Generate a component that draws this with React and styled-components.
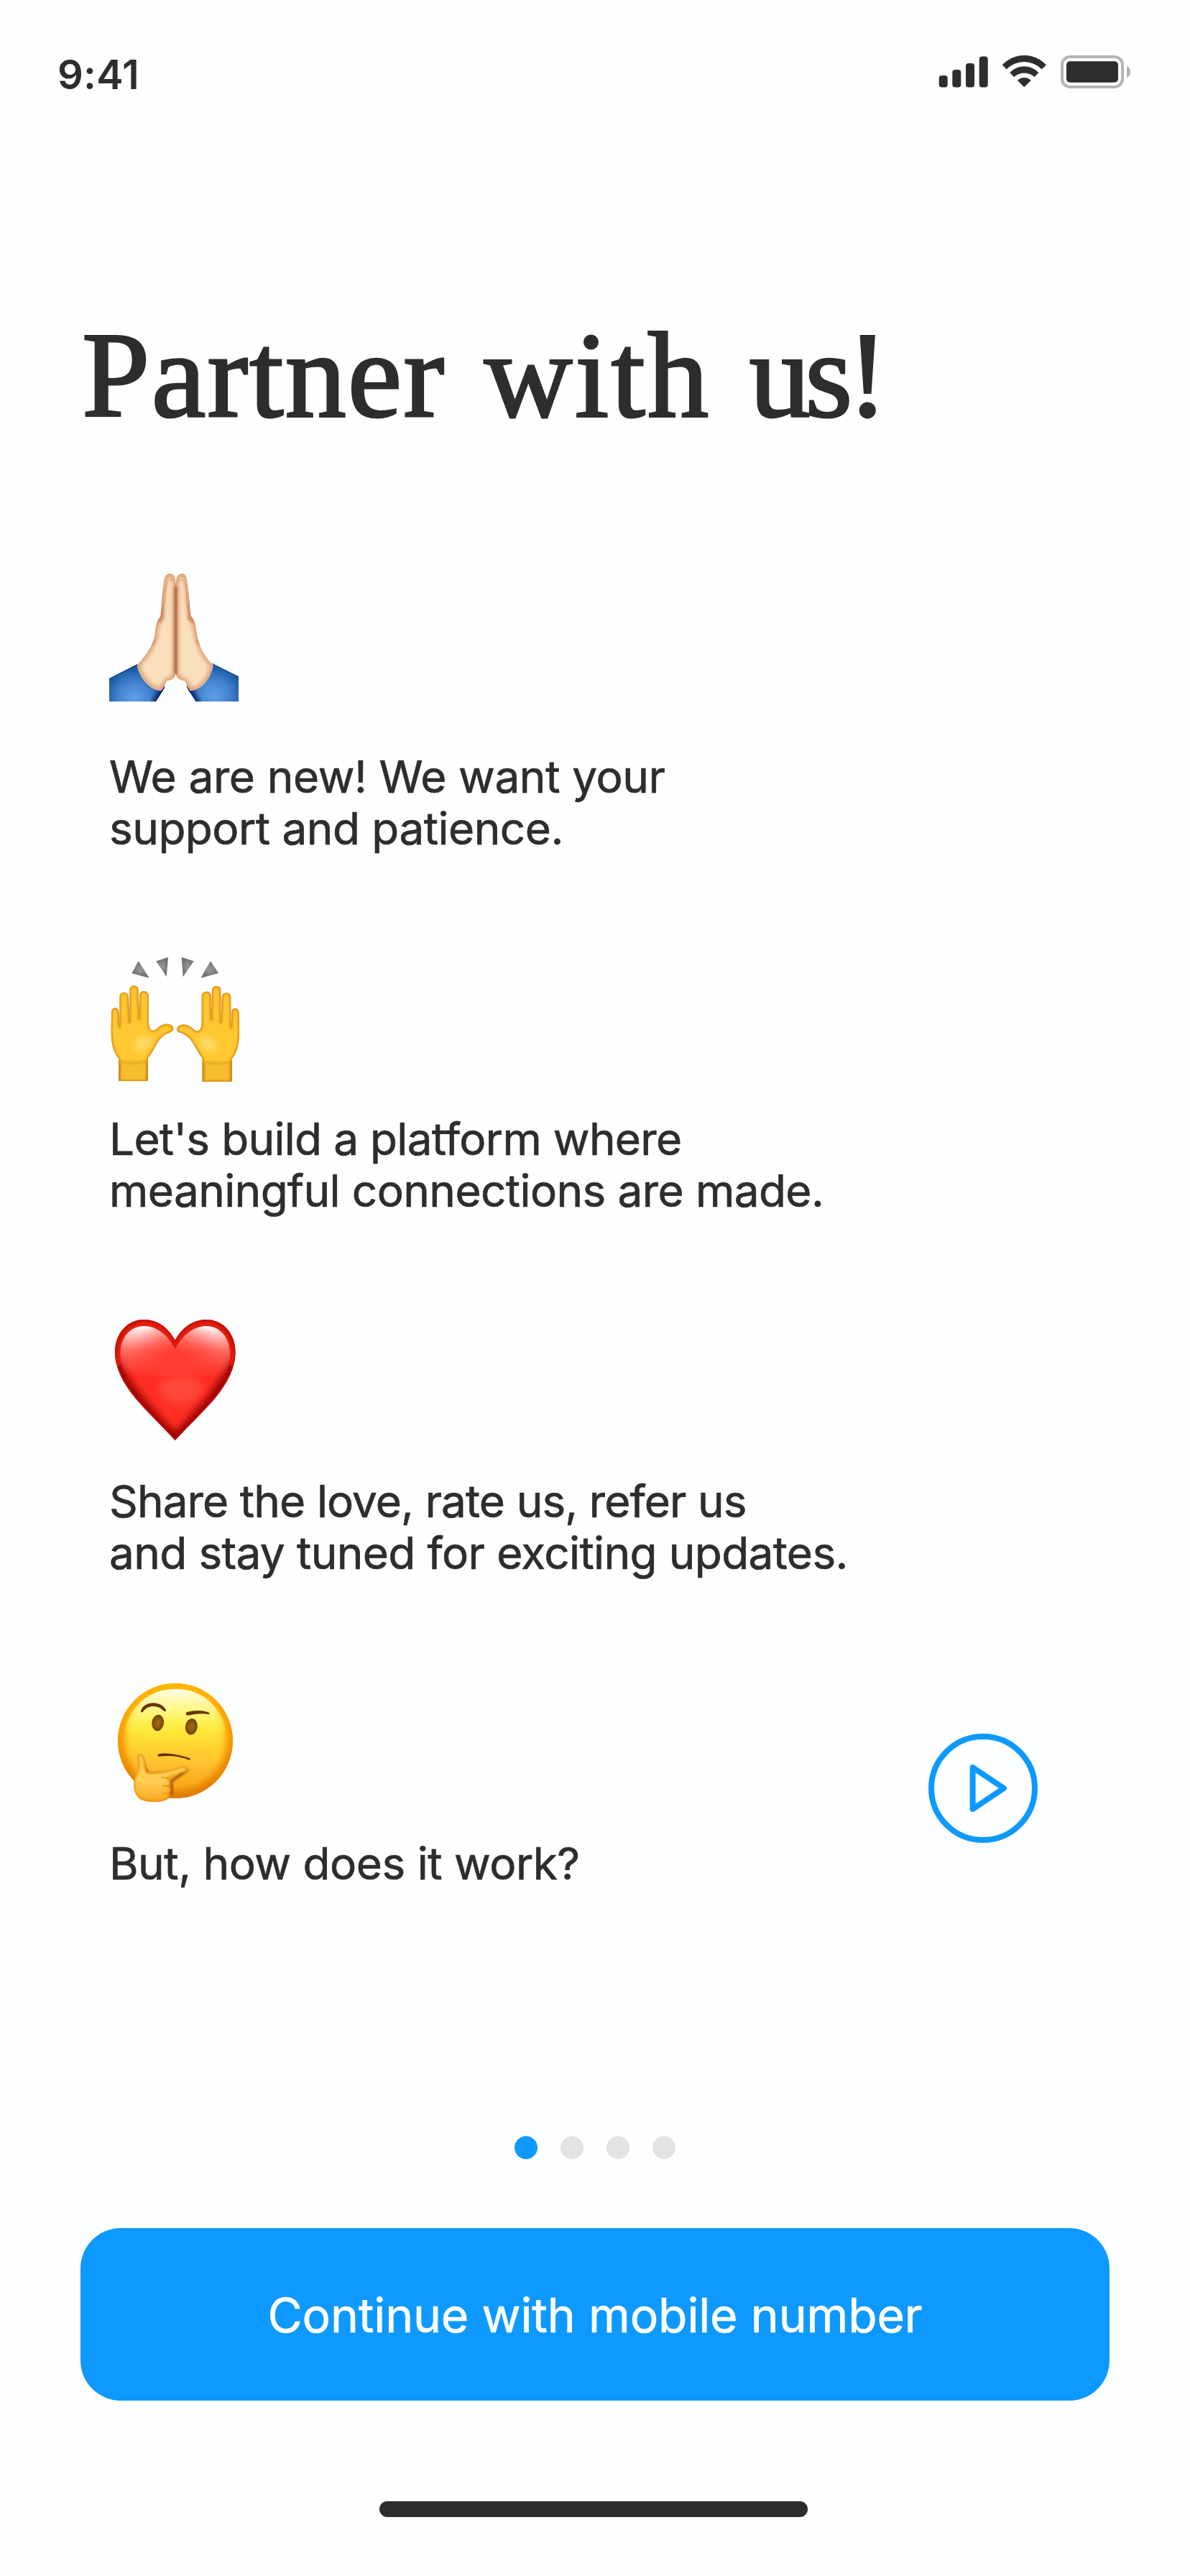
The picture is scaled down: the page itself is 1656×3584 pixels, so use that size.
import React from 'react';
import styled, { createGlobalStyle } from 'styled-components';

const ink = '#2b2d2f';
const blue = '#0d99ff';

const GlobalStyle = createGlobalStyle`
  * { box-sizing: border-box; }
  body { margin: 0; background: #fdfeff; }
`;

const Screen = styled.main`
  display: flex;
  flex-direction: column;
  width: 1656px;
  height: 3584px;
  overflow: hidden;
  background: #fdfeff;
  color: ${ink};
  font-family: Inter, 'Liberation Sans', sans-serif;
`;

const StatusBar = styled.header`
  display: flex;
  justify-content: space-between;
  align-items: flex-start;
  padding: 70px 80px 0;
  height: 176px;
`;

const Clock = styled.time`
  font-size: 56px;
  font-weight: 600;
  line-height: 68px;
  letter-spacing: 0.3px;
`;

const StatusIcons = styled.svg`
  display: block;
  width: 270px;
  height: 48px;
  margin-top: 6px;
`;

const Title = styled.h1`
  margin: 246px 0 0 114px;
  font-family: 'Liberation Serif', serif;
  font-size: 170px;
  font-weight: 400;
  line-height: 200px;
  word-spacing: 11px;
  white-space: nowrap;
  -webkit-text-stroke: 3px ${ink};
`;

const Word = styled.span`
  letter-spacing: ${(p) => p.$tracking}px;
`;

const Points = styled.ul`
  display: flex;
  flex-direction: column;
  gap: 139px;
  margin: 175px 212px 0 152px;
  padding: 0;
  list-style: none;
`;

const Point = styled.li`
  display: flex;
  justify-content: space-between;
  align-items: center;
`;

const PointBody = styled.div`
  display: flex;
  flex-direction: column;
  gap: ${(p) => p.$gap}px;
`;

const Emoji = styled.svg`
  display: block;
  width: 180px;
  height: 180px;
  overflow: visible;
`;

const Copy = styled.p`
  margin: 0;
  font-size: 62px;
  font-weight: 400;
  line-height: 72px;
  white-space: nowrap;
  -webkit-text-stroke: 0.7px ${ink};
`;

const Line = styled.span`
  display: block;
  letter-spacing: ${(p) => p.$tracking}px;
`;

const PlayButton = styled.button`
  display: block;
  width: 152px;
  height: 152px;
  margin-top: 11px;
  padding: 0;
  border: 0;
  background: none;

  svg { display: block; }
`;

const Footer = styled.footer`
  display: flex;
  flex-direction: column;
  align-items: center;
  margin-top: auto;
  padding: 0 112px 82px;
`;

const Dots = styled.div`
  display: flex;
  gap: 32px;
  margin-bottom: 96px;
`;

const Dot = styled.span`
  width: 32px;
  height: 32px;
  border-radius: 50%;
  background: ${(p) => (p.$active ? blue : '#e3e3e3')};
`;

const ContinueButton = styled.button`
  width: 100%;
  height: 240px;
  margin-bottom: 140px;
  padding: 2px 0 0;
  border: 0;
  border-radius: 56px;
  background: ${blue};
  color: #fdfeff;
  font-family: inherit;
  font-size: 66px;
  font-weight: 400;
  letter-spacing: -0.15px;
  -webkit-text-stroke: 0.7px #fdfeff;
`;

const HomeIndicator = styled.div`
  width: 596px;
  height: 22px;
  margin-right: 4px;
  border-radius: 11px;
  background: ${ink};
`;

function DeviceStatus() {
  return (
    <StatusIcons viewBox="1306 76 270 48" fill={ink}>
      <rect x="1306.7" y="105" width="12" height="16.4" rx="4" />
      <rect x="1325.3" y="97" width="12" height="24.4" rx="4" />
      <rect x="1344" y="88" width="12" height="33.4" rx="4" />
      <rect x="1362.7" y="78.4" width="12" height="43" rx="4" />
      <g transform="translate(1280 60) scale(.3333)" stroke={ink} strokeWidth="2" strokeLinejoin="round">
        <path d="M345 91 A125 125 0 0 1 527 91 L509 108 A103 103 0 0 0 362 108 Z" />
        <path d="M377 123 A82 82 0 0 1 495 123 L479 140 A66 66 0 0 0 393 140 Z" />
        <path d="M409 156 A38 38 0 0 1 463 156 L436 183 Z" />
      </g>
      <rect x="1478" y="79" width="84" height="42" rx="11" fill="none" stroke="#b4b5b6" strokeWidth="4" />
      <rect x="1484" y="85.3" width="72" height="29.4" rx="5" />
      <path d="M1568 92 A8.7 8.7 0 0 1 1568 108 Z" fill="#b4b5b6" />
    </StatusIcons>
  );
}

const sleeve = 'M66 492 L188 430 Q181 434 183 441 C195 490 235 540 283 543 L298 519 Q299 530 292 540 L261 589 L66 589 Z';
const sleeveRight = 'M606 484 L490 426 Q500 431 499 440 C487 493 455 537 405 543 L390 519 Q388 529 396 540 L428 589 L606 589 Z';
const palm = 'M343 475 L343 85 C342 66 331 54 318 54 C303 55 296 68 294 88 C287 130 286 185 280 232 C265 248 260 275 257 310 C250 350 225 390 183 436 C190 485 235 540 283 543 C296 528 298 514 308 502 C328 499 339 492 343 475 Z';
const palmRight = 'M344 475 L344 85 C345 66 356 54 370 54 C383 55 390 68 392 88 C398 130 401 185 407 232 C423 246 427 275 431 305 C438 350 460 395 499 437 C493 490 450 540 405 543 C392 531 392 516 380 502 C360 499 348 492 344 475 Z';

function PrayingHands() {
  return (
    <Emoji viewBox="66 51 540 540">
      <defs>
        <filter id="prayBlur" x="-40%" y="-40%" width="180%" height="180%"><feGaussianBlur stdDeviation="9" /></filter>
        <filter id="praySoft" filterUnits="userSpaceOnUse" x="200" y="20" width="300" height="520"><feGaussianBlur stdDeviation="5" /></filter>
        <clipPath id="prayL"><path d={palm} /></clipPath>
        <clipPath id="prayR"><path d={palmRight} /></clipPath>
        <clipPath id="sleeveL"><path d={sleeve} /></clipPath>
        <clipPath id="sleeveR"><path d={sleeveRight} /></clipPath>
        <radialGradient id="sleeveFillL" gradientUnits="userSpaceOnUse" cx="170" cy="575" r="145">
          <stop offset="0" stopColor="#5f9fe8" /><stop offset=".45" stopColor="#4684cf" /><stop offset="1" stopColor="#0b4b94" />
        </radialGradient>
        <radialGradient id="sleeveFillR" gradientUnits="userSpaceOnUse" cx="500" cy="565" r="145">
          <stop offset="0" stopColor="#5f9fe8" /><stop offset=".45" stopColor="#4684cf" /><stop offset="1" stopColor="#0b4b94" />
        </radialGradient>
      </defs>
      <g clipPath="url(#sleeveL)">
        <path d={sleeve} fill="url(#sleeveFillL)" />
        <path d="M300 515 L255 600" stroke="#001b66" strokeWidth="24" filter="url(#prayBlur)" />
        <path d="M66 492 L190 429" stroke="#002d70" strokeWidth="5" />
      </g>
      <g clipPath="url(#sleeveR)">
        <path d={sleeveRight} fill="url(#sleeveFillR)" />
        <path d="M388 515 L435 600" stroke="#001b66" strokeWidth="24" filter="url(#prayBlur)" />
        <path d="M606 484 L490 425" stroke="#002d70" strokeWidth="5" />
      </g>
      <g clipPath="url(#prayL)">
        <path d={palm} fill="#fadfbd" />
        <path d={palm} fill="none" stroke="#d79468" strokeWidth="20" filter="url(#prayBlur)" />
        <path d="M280 60 L285 240 L255 260 L245 350" fill="none" stroke="#cf8b62" strokeWidth="16" filter="url(#praySoft)" />
        <path d="M280 265 C302 210 296 130 304 100 C309 76 333 75 341 94" fill="none" stroke="#d3997a" strokeWidth="3" />
        <path d="M345 110 V475" stroke="#a9603c" strokeWidth="14" filter="url(#praySoft)" />
      </g>
      <g clipPath="url(#prayR)">
        <path d={palmRight} fill="#fadfbd" />
        <path d={palmRight} fill="none" stroke="#d79468" strokeWidth="20" filter="url(#prayBlur)" />
        <path d="M408 60 L402 240 L432 260 L443 350" fill="none" stroke="#cf8b62" strokeWidth="16" filter="url(#praySoft)" />
        <path d="M407 260 C385 205 390 130 384 100 C379 76 354 75 346 94" fill="none" stroke="#d3997a" strokeWidth="3" />
        <path d="M342 110 V475" stroke="#a9603c" strokeWidth="14" filter="url(#praySoft)" />
      </g>
      <path d="M343.500 95 V472" stroke="#a96543" strokeWidth="2.500" />
    </Emoji>
  );
}

const hand = 'M105 583 L105 487 C84 468 73 425 73 370 L75 295 C76 270 105 270 106 295 L109 360 L109 230 C110 206 145 206 147 230 L151 340 L151 200 C152 178 187 178 188 200 L191 327 L192 224 C193 201 229 201 231 225 L231 335 C232 370 247 380 264 364 C288 340 316 338 331 354 C339 367 333 376 318 380 C288 391 276 408 264 428 C251 452 240 472 228 486 L228 583 Z';

function RaisedHand() {
  return (
    <g clipPath="url(#handClip)">
      <path d={hand} fill="#ffc832" />
      <path d="M100 495 H235 V590 H100 Z" fill="#f6bd30" />
      <ellipse cx="205" cy="425" rx="42" ry="24" transform="rotate(-35 205 425)" fill="#ffdb6c" filter="url(#handBlur)" />
      <path d="M108 498 Q165 520 226 496" fill="none" stroke="#e8a01e" strokeWidth="6" filter="url(#handSoft)" />
      <path d={hand} fill="none" stroke="#da8508" strokeWidth="10" filter="url(#handSoft)" />
      <path d={hand} fill="none" stroke="#de9426" strokeWidth="1.500" />
      <path d="M105 500 V583 M228 500 V583" stroke="#c9861c" strokeWidth="14" filter="url(#handSoft)" />
    </g>
  );
}

function RaisingHands() {
  return (
    <Emoji viewBox="66 54 540 540">
      <defs>
        <clipPath id="handClip"><path d={hand} /></clipPath>
        <filter id="handBlur" x="-50%" y="-50%" width="200%" height="200%"><feGaussianBlur stdDeviation="12" /></filter>
        <filter id="handSoft" filterUnits="userSpaceOnUse" x="40" y="150" width="330" height="460"><feGaussianBlur stdDeviation="4" /></filter>
        <radialGradient id="rayFill"><stop offset="0" stopColor="#989898" /><stop offset="1" stopColor="#6f6f6f" /></radialGradient>
      </defs>
      <g fill="url(#rayFill)">
        <path d="M188 81 L160 133 L233 152 Z" />
        <path d="M262 82 L312 65 L305 147 Z" />
        <path d="M368 65 L419 82 L374 147 Z" />
        <path d="M489 81 L522 132 L448 152 Z" />
      </g>
      <RaisedHand />
      <g transform="translate(683 2) scale(-1 1)"><RaisedHand /></g>
    </Emoji>
  );
}

const heart = 'M341 552 C290 496 222 432 175 376 C124 314 90 250 90 184 C90 104 142 48 211 48 C270 48 314 84 341 134 C368 84 412 48 471 48 C541 48 593 104 593 184 C593 250 559 314 508 376 C461 432 392 496 341 552 Z';

function RedHeart() {
  return (
    <Emoji viewBox="66 36 540 540">
      <defs>
        <clipPath id="heartClip"><path d={heart} /></clipPath>
        <filter id="heartBlur" x="-30%" y="-30%" width="160%" height="160%"><feGaussianBlur stdDeviation="16" /></filter>
        <filter id="heartSoft"><feGaussianBlur stdDeviation="3.500" /></filter>
        <linearGradient id="heartGloss" gradientUnits="userSpaceOnUse" x1="0" y1="74" x2="0" y2="285">
          <stop offset="0" stopColor="#fff" /><stop offset=".12" stopColor="#fff" stopOpacity=".8" />
          <stop offset=".5" stopColor="#fff" stopOpacity=".27" /><stop offset="1" stopColor="#fff" stopOpacity="0" />
        </linearGradient>
        <radialGradient id="heartGlow" gradientUnits="userSpaceOnUse" cx="345" cy="225" r="190">
          <stop offset="0" stopColor="#ff3b2f" /><stop offset=".25" stopColor="#ff3b2f" stopOpacity=".9" /><stop offset="1" stopColor="#ff3b2f" stopOpacity="0" />
        </radialGradient>
      </defs>
      <g clipPath="url(#heartClip)">
        <path d={heart} fill="#ff2e22" />
        <ellipse cx="365" cy="340" rx="90" ry="60" fill="#ff4638" filter="url(#heartBlur)" />
        <path d="M80 220 C110 320 220 440 341 562 C460 440 570 320 600 220" fill="none" stroke="#960300" strokeWidth="62" filter="url(#heartBlur)" />
        <path d={heart} fill="none" stroke="#c90f07" strokeWidth="10" filter="url(#heartSoft)" />
        <path d="M102 240 C88 140 142 60 211 60 C272 60 318 110 341 153 C364 110 412 60 471 60 C541 60 595 140 581 240" fill="none" stroke="#e01a0f" strokeWidth="25" filter="url(#heartSoft)" />
        <path d="M92 240 C78 130 142 50 211 50 C272 50 318 90 341 136 C364 90 412 50 471 50 C541 50 605 130 591 240" fill="none" stroke="#bd0a04" strokeWidth="8" filter="url(#heartSoft)" />
      </g>
      <path d="M341 173 C318 124 272 75 211 75 C154 75 112 122 112 190 C112 225 122 255 138 285 L544 285 C560 255 570 225 570 190 C570 122 528 75 471 75 C412 75 364 124 341 173 Z" fill="url(#heartGloss)" />
      <path d="M341 173 C318 124 272 75 211 75 C154 75 112 122 112 190 C112 225 122 255 138 285 L544 285 C560 255 570 225 570 190 C570 122 528 75 471 75 C412 75 364 124 341 173 Z" fill="url(#heartGlow)" />
    </Emoji>
  );
}

const thinkingHand = 'M182 375 C182 355 207 356 213 376 C219 396 212 425 225 435 C240 442 262 438 290 434 L372 412 C395 407 400 428 382 436 L313 462 C325 468 323 488 315 494 C325 501 324 519 315 525 C321 532 318 541 312 548 C290 564 230 567 198 551 C164 532 164 480 175 452 C188 428 190 408 182 375 Z';

function ThinkingFace() {
  return (
    <Emoji viewBox="66 48 540 540">
      <defs>
        <clipPath id="faceClip"><circle cx="342" cy="306" r="240" /></clipPath>
        <clipPath id="thinkHandClip"><path d={thinkingHand} /></clipPath>
        <filter id="faceBlur" x="-30%" y="-30%" width="160%" height="160%"><feGaussianBlur stdDeviation="15" /></filter>
        <filter id="faceSoft" x="-20%" y="-20%" width="140%" height="140%"><feGaussianBlur stdDeviation="4" /></filter>
        <linearGradient id="faceFill" x1="0" y1="0" x2="0" y2="1">
          <stop offset="0" stopColor="#ffd21a" /><stop offset=".3" stopColor="#fff04a" />
          <stop offset=".46" stopColor="#ffe032" /><stop offset=".72" stopColor="#ffbe2d" /><stop offset="1" stopColor="#f79a0c" />
        </linearGradient>
        <linearGradient id="faceGloss" gradientUnits="userSpaceOnUse" x1="0" y1="90" x2="0" y2="310">
          <stop offset="0" stopColor="#fffff0" stopOpacity=".98" /><stop offset=".4" stopColor="#fffb9c" stopOpacity=".75" />
          <stop offset=".75" stopColor="#ffef45" stopOpacity=".35" /><stop offset="1" stopColor="#ffe73a" stopOpacity="0" />
        </linearGradient>
        <linearGradient id="faceRim" x1="0" y1="0" x2="0" y2="1">
          <stop offset="0" stopColor="#ffb300" /><stop offset=".5" stopColor="#f99500" /><stop offset="1" stopColor="#de7c00" />
        </linearGradient>
        <radialGradient id="eyeFill"><stop offset="0" stopColor="#a0690a" /><stop offset=".6" stopColor="#8d5907" /><stop offset="1" stopColor="#6a3a02" /></radialGradient>
        <linearGradient id="thinkHandFill" x1="0" y1="0" x2="0" y2="1">
          <stop offset="0" stopColor="#ffd04a" /><stop offset=".55" stopColor="#ffcf58" /><stop offset="1" stopColor="#fba61c" />
        </linearGradient>
      </defs>
      <g clipPath="url(#faceClip)">
        <circle cx="342" cy="306" r="240" fill="url(#faceFill)" />
        <circle cx="342" cy="306" r="238" fill="none" stroke="url(#faceRim)" strokeWidth="56" filter="url(#faceBlur)" />
        <circle cx="342" cy="306" r="239" fill="none" stroke="url(#faceRim)" strokeWidth="12" filter="url(#faceSoft)" />
        <path d="M132 260 C160 150 240 90 342 90 C444 90 526 150 552 260 C540 330 144 330 132 260 Z" fill="url(#faceGloss)" />
        <path d="M205 380 C212 420 218 440 240 446 L382 434 L325 475 L328 530" fill="none" stroke="#9a4a08" strokeWidth="12" filter="url(#faceSoft)" opacity=".85" />
      </g>
      <g fill="url(#eyeFill)">
        <ellipse cx="269" cy="231" rx="25" ry="34" transform="rotate(8 269 231)" />
        <ellipse cx="409" cy="247" rx="25" ry="34" transform="rotate(8 409 247)" />
      </g>
      <path d="M198 180 C214 135 286 139 303 178 C304 184 298 185 293 181 C268 154 225 157 208 184 C204 190 197 187 198 180 Z" fill="#693302" />
      <path d="M389 187 C420 177 460 177 484 189 C487 194 483 197 478 195 C450 190 420 196 395 200 C386 202 384 190 389 187 Z" fill="#693302" />
      <path d="M270 362 C302 353 352 362 403 379 C406 386 400 388 396 385 C360 370 318 366 276 371 C269 372 266 366 270 362 Z" fill="#5f3002" />
      <g clipPath="url(#thinkHandClip)">
        <path d={thinkingHand} fill="url(#thinkHandFill)" />
        <path d={thinkingHand} fill="none" stroke="#f08c08" strokeWidth="11" filter="url(#faceSoft)" />
        <path d="M283 458 L312 463 M287 493 L314 495 M290 524 L314 526" fill="none" stroke="#e58a12" strokeWidth="4" />
      </g>
    </Emoji>
  );
}

const points = [
  { Icon: PrayingHands, gap: 68, lines: [['We are new! We want your', -0.36], ['support and patience.', -0.5]] },
  { Icon: RaisingHands, gap: 41, lines: [["Let's build a platform where", -0.68], ['meaningful connections are made.', -0.58]] },
  { Icon: RedHeart, gap: 41, lines: [['Share the love, rate us, refer us', -0.88], ['and stay tuned for exciting updates.', -0.6]] },
  { Icon: ThinkingFace, gap: 41, lines: [['But, how does it work?', -0.46]], playable: true },
];

export default function App() {
  return (
    <Screen>
      <GlobalStyle />
      <StatusBar>
        <Clock>9:41</Clock>
        <DeviceStatus />
      </StatusBar>
      <Title>
        <Word $tracking={2.2}>Partner</Word> <Word $tracking={3.3}>with</Word> <Word $tracking={-7.5}>us!</Word>
      </Title>
      <Points>
        {points.map(({ Icon, gap, lines, playable }) => (
          <Point key={lines[0][0]}>
            <PointBody $gap={gap}>
              <Icon />
              <Copy>
                {lines.map(([text, tracking]) => (
                  <Line key={text} $tracking={tracking}>{text}</Line>
                ))}
              </Copy>
            </PointBody>
            {playable && (
              <PlayButton aria-label="Play">
                <svg width="152" height="152" viewBox="0 0 152 152" fill="none" stroke={blue} strokeWidth="8" strokeLinejoin="round">
                  <circle cx="76" cy="76" r="72" />
                  <path d="M61.600 47 V105 L105 76 Z" />
                </svg>
              </PlayButton>
            )}
          </Point>
        ))}
      </Points>
      <Footer>
        <Dots>
          <Dot $active />
          <Dot />
          <Dot />
          <Dot />
        </Dots>
        <ContinueButton>Continue with mobile number</ContinueButton>
        <HomeIndicator />
      </Footer>
    </Screen>
  );
}
